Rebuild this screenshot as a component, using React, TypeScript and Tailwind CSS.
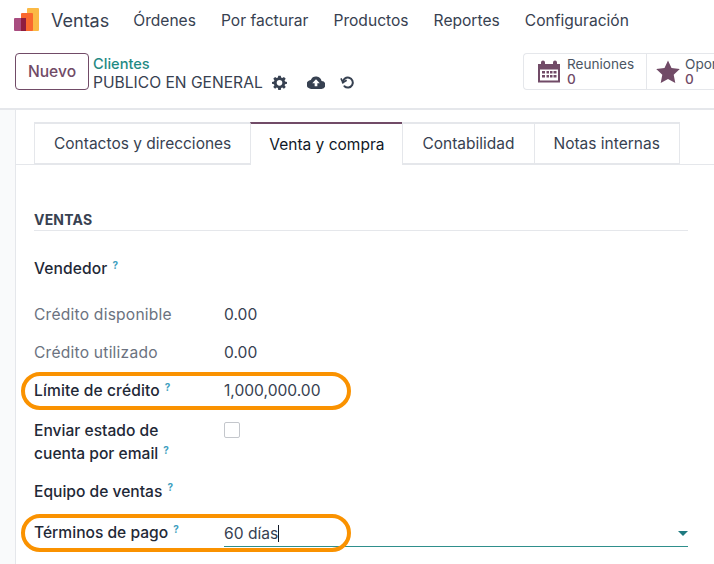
import React from 'react'

const Help = () => (
  <sup className="text-[10px] font-bold text-[#3f9fc0] leading-none ml-[5px] relative -top-[5px]">?</sup>
)

const Highlight = ({ className }: { className: string }) => (
  <div className={`absolute left-[21px] w-[330px] h-[38px] rounded-[19px] border-[4px] border-[#fa9200] pointer-events-none ${className}`} />
)

const Row = ({ label, value, muted, help }: { label: string; value?: string; muted?: boolean; help?: boolean }) => (
  <div className="flex h-[38px] items-center">
    <div className={`w-[190px] ${muted ? 'text-[#6b7280] tracking-[0.22px]' : 'font-medium text-[#1f2937] tracking-[0.1px]'}`}>
      {label}
      {help && <Help />}
    </div>
    {value && <div className="text-[#374151]">{value}</div>}
  </div>
)

export default function App() {
  const menu = ['Órdenes', 'Por facturar', 'Productos', 'Reportes', 'Configuración']
  const tabs = ['Contactos y direcciones', 'Venta y compra', 'Contabilidad', 'Notas internas']

  return (
    <div className="w-[714px] h-[564px] overflow-hidden bg-white relative font-['Inter',sans-serif] text-[15.6px] text-[#374151]">
      {/* Navbar */}
      <div className="h-[41px] flex items-center pl-[14px]">
        <svg width="26" height="24" viewBox="0 0 26 24" className="mr-[11px] -mt-[2px]">
          <rect x="13" y="0" width="12" height="23" rx="1" fill="#fbb945" />
          <rect x="7" y="5" width="12" height="18" rx="1" fill="#f9682e" />
          <rect x="0" y="10" width="12" height="13" rx="1" fill="#a94d80" />
          <rect x="7" y="10" width="5" height="13" fill="#8f1d3f" />
        </svg>
        <span className="text-[18px] text-[#374151] mr-[24px]">Ventas</span>
        <div className="flex gap-[25px]">
          {menu.map((m) => (
            <span key={m}>{m}</span>
          ))}
        </div>
      </div>

      {/* Control panel */}
      <div className="h-[69px] border-b-2 border-[#e5e7eb] flex items-start pl-[15px] pt-[12px]">
        <button className="w-[74px] h-[37px] rounded-[4px] border border-[#714b67] text-[#714b67] font-medium">Nuevo</button>
        <div className="ml-[4px] leading-[18px] mt-[2px]">
          <div className="text-[#1f8a84] font-medium text-[14.6px]">Clientes</div>
          <div className="flex items-center mt-px">
            <span className="text-[#374151]">PUBLICO EN GENERAL</span>
            <svg width="15" height="15" viewBox="0 0 24 24" fill="#374151" className="ml-[9px] -mt-[1px]">
              <path fillRule="evenodd" d="M10 1h4l.6 3.1 1.900.8L19.100 3l2.900 2.900-1.900 2.600.8 1.900L24 11v3l-3.100.6-.8 1.900 1.900 2.600L19.100 22l-2.600-1.900-1.900.8L14 24h-4l-.6-3.100-1.900-.8L4.900 22 2 19.100l1.900-2.600-.8-1.900L0 14v-3l3.100-.6.8-1.900L2 5.900 4.900 3l2.600 1.900 1.900-.8zM12 8a4.500 4.500 0 1 0 0 9 4.500 4.500 0 0 0 0-9z" />
            </svg>
            <svg width="18" height="15" viewBox="0 0 24 18" fill="#374151" className="ml-[20px] -mt-[2px]">
              <path fillRule="evenodd" d="M19.400 7.100A7.500 7.500 0 0 0 5.100 5.500 6 6 0 0 0 6 17.500h13a4.800 4.800 0 0 0 .4-10.400zM12 4.500l5 5.500h-3.200v4h-3.600v-4H7z" />
            </svg>
            <svg width="15" height="15" viewBox="0 0 24 24" fill="none" stroke="#374151" strokeWidth="3.200" className="ml-[15px] -mt-[2px]">
              <path d="M4.500 12a8 8 0 1 1 2.600 6" strokeLinecap="round" />
              <path d="M1.500 5.500l3.200 6.500 6-3.500" strokeWidth="2.600" />
            </svg>
          </div>
        </div>
        <div className="ml-auto flex h-[37px] w-[191px] rounded-l-[4px] border border-r-0 border-[#e5e7eb] overflow-hidden">
          <div className="w-[123px] border-r border-[#e5e7eb] flex items-center pl-[13px] shrink-0">
            <svg width="24" height="24" viewBox="0 0 24 24" fill="#714b67" className="shrink-0">
              <path fillRule="evenodd" d="M1 4h3V2.500a2 2 0 0 1 4 0V4h8V2.500a2 2 0 0 1 4 0V4h3v18.500H1zM3 9.500v11h18v-11zM5 11h3v2.500H5zm4.500 0h2.500v2.500H9.500zm3.500 0h2.500v2.500H13zm3.500 0h3v2.500h-3zM5 15h3v2.500H5zm4.500 0h2.500v2.500H9.500zm3.500 0h2.500v2.500H13zm3.500 0h3v2.500h-3z" />
            </svg>
            <div className="ml-[6px] text-[13.6px] leading-[15px] text-[#4b5563]">
              Reuniones
              <div className="text-[#714b67] font-medium">0</div>
            </div>
          </div>
          <div className="flex items-center pl-[9px]">
            <svg width="24" height="23" viewBox="0 0 24 23" fill="#714b67" className="shrink-0">
              <path d="M12 .500l3.500 7.600 8.300 1-6.100 5.700 1.600 8.200-7.300-4.100-7.300 4.100 1.600-8.200L.2 9.100l8.300-1z" />
            </svg>
            <div className="ml-[5px] w-[30px] overflow-hidden text-[13.6px] leading-[15px] text-[#4b5563]">
              Opor
              <div className="text-[#714b67] font-medium">0</div>
            </div>
          </div>
        </div>
      </div>

      {/* Sheet */}
      <div className="flex h-[454px]">
        <div className="w-[15px] bg-[#f9fafb] border-r border-[#e5e7eb] box-content shrink-0" />
        <div className="flex-1 min-w-0">
          <div className="pt-[12px] pl-[18px] border-b border-[#e5e7eb] h-[55px] text-[15.5px]">
            <div className="flex h-[43px]">
              {tabs.map((t) =>
                t === 'Venta y compra' ? (
                  <div key={t} className="h-[43px] px-[18px] flex items-center bg-white border-x border-[#e5e7eb] border-t-2 border-t-[#714b67] text-[#111827] -ml-px">
                    {t}
                  </div>
                ) : (
                  <div key={t} className="h-[42px] px-[19px] flex items-center border-t-2 border-x border-b border-[#e5e7eb] text-[#374151] -ml-px first:ml-0">
                    {t}
                  </div>
                ),
              )}
            </div>
          </div>

          <div className="pl-[18px] pr-[26px]">
            <div className="mt-[46px] h-[20px] border-b border-[#e5e7eb] text-[14px] font-bold text-[#374151] tracking-[0.2px] leading-[18px]">VENTAS</div>
            <div className="mt-[19px]">
              <Row label="Vendedor" help />
            </div>
            <div className="mt-[8px]">
              <Row label="Crédito disponible" value="0.00" muted />
              <Row label="Crédito utilizado" value="0.00" muted />
              <Row label="Límite de crédito" value="1,000,000.00" help />
            </div>
            <div className="flex mt-[9px]">
              <div className="w-[190px] font-medium text-[#1f2937] leading-[23px]">
                Enviar estado de
                <br />
                cuenta por email
                <Help />
              </div>
              <div className="w-[16px] h-[16px] border border-[#c4c7cc] rounded-[2px] mt-[3px]" />
            </div>
            <div className="h-[38px] flex items-center font-medium text-[#1f2937] mt-[8px]">
              <span>Equipo de ventas</span>
              <Help />
            </div>
            <div className="flex h-[38px] items-center mt-[3px]">
              <div className="w-[190px] font-medium text-[#1f2937]">
                Términos de pago
                <Help />
              </div>
              <div className="flex-1 h-[26px] mt-[2px] border-b border-[#2f8f8c] flex items-start pt-[1px] relative">
                <span className="text-[#374151]">60 días</span>
                <span className="w-px h-[17px] bg-[#111827] mt-[3px]" />
                <div className="absolute right-0 top-[10px] w-0 h-0 border-x-[5px] border-x-transparent border-t-[5px] border-t-[#1f7a80]" />
              </div>
            </div>
          </div>
        </div>
      </div>

      <Highlight className="top-[372px]" />
      <Highlight className="top-[514px]" />
    </div>
  )
}
